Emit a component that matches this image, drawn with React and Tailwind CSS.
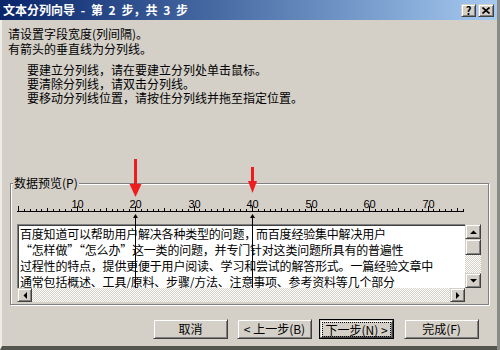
import React from "react";

const CW = 5.85;
const colX = (c) => Math.round(1 + c * CW);

const raised =
  "bg-[#d4d0c8] border border-t-[#d4d0c8] border-l-[#d4d0c8] border-r-[#404040] border-b-[#404040] shadow-[inset_1px_1px_0_#fff,inset_-1px_-1px_0_#808080]";

const lines = [
  "百度知道可以帮助用户解决各种类型的问题，而百度经验集中解决用户",
  "“怎样做”“怎么办”这一类的问题，并专门针对这类问题所具有的普遍性",
  "过程性的特点，提供更便于用户阅读、学习和尝试的解答形式。一篇经验文章中",
  "通常包括概述、工具/原料、步骤/方法、注意事项、参考资料等几个部分",
];

function Arrow({ dir }) {
  const pts = {
    up: "0,4 7,4 3.5,0.5",
    down: "0,0 7,0 3.5,3.5",
    left: "4,0 4,7 0.5,3.5",
    right: "0,0 0,7 3.5,3.5",
  }[dir];
  const vert = dir === "up" || dir === "down";
  return (
    <svg width={vert ? 7 : 4} height={vert ? 4 : 7}>
      <polygon points={pts} fill="#000" />
    </svg>
  );
}

function Ruler() {
  const ticks = [];
  for (let c = 0; c <= 76; c++) {
    const h = c % 10 === 0 ? 5 : c % 5 === 0 ? 3 : 2;
    ticks.push(<rect key={c} x={colX(c)} y={22 - h} width="1" height={h} fill="#000" />);
  }
  return (
    <svg width="465" height="35" className="block">
      <rect x="0" y="22" width={colX(76) + 1} height="1" fill="#000" />
      {ticks}
      {[10, 20, 30, 40, 50, 60, 70].map((n) => (
        <text
          key={n}
          x={colX(n) + 0.5}
          y="19"
          fontSize="11"
          textAnchor="middle"
          fontFamily="Liberation Sans, Arial, sans-serif"
          fill="#000"
        >
          {n}
        </text>
      ))}
    </svg>
  );
}

function Markers() {
  const a = colX(20);
  const b = colX(40);
  return (
    <svg width="465" height="113" className="absolute left-0 top-0 overflow-visible pointer-events-none">
      {/* black column breaks */}
      {[a, b].map((x) => (
        <g key={x}>
          <polygon points={`${x - 2},${29} ${x + 3},${29} ${x + 0.5},${25}`} fill="#000" />
          <rect x={x} y="29" width="1" height="70" fill="#000" />
        </g>
      ))}
      {/* red arrows */}
      <rect x={a - 1} y="-30" width="3" height="25" fill="#ee1d1d" />
      <polygon points={`${a - 5.5},-5 ${a + 6.5},-5 ${a + 0.5},8`} fill="#ee1d1d" />
      <rect x={b - 1} y="-22" width="3" height="14" fill="#ee1d1d" />
      <polygon points={`${b - 4},-8 ${b + 5},-8 ${b + 0.5},4`} fill="#ee1d1d" />
    </svg>
  );
}

function Btn({ children, def }) {
  if (def) {
    return (
      <div className="w-[75px] h-[20px] border border-black">
        <div className={`${raised} w-full h-full flex items-center justify-center`}>
          <span className="outline outline-1 outline-dotted outline-black px-[2px] leading-[13px]">{children}</span>
        </div>
      </div>
    );
  }
  return (
    <div className={`${raised} w-[75px] h-[20px] flex items-center justify-center`}>{children}</div>
  );
}

export default function App() {
  return (
    <div
      className="w-[500px] h-[350px] flex flex-col bg-[#d4d0c8] border-r-[3px] border-r-[#8a8a86] overflow-hidden text-[12px] text-black"
      style={{ fontFamily: '"Noto Sans CJK SC", "Liberation Sans", sans-serif' }}
    >
      {/* title bar */}
      <div className="h-[20px] shrink-0 flex items-center justify-between pl-[3px] pr-[3px] bg-linear-to-r from-[#0a246a] to-[#a6caf0]">
        <span className="text-white font-bold text-[12px] leading-[14px] whitespace-pre [word-spacing:3px]">
          文本分列向导 - 第 2 步，共 3 步
        </span>
        <div className="flex gap-[2px]">
          <div className={`${raised} w-[15px] h-[13px] flex items-center justify-center text-[11px] font-bold leading-none`}>
            ?
          </div>
          <div className={`${raised} w-[16px] h-[13px] flex items-center justify-center`}>
            <svg width="8" height="7">
              <path d="M0.5 0.5 L7.5 6.5 M7.5 0.5 L0.5 6.5" stroke="#000" strokeWidth="1.6" />
            </svg>
          </div>
        </div>
      </div>

      {/* body */}
      <div className="flex-1 flex flex-col border-l-2 border-l-[#eeede8] border-b-4 border-b-[#55554f]">
        <div className="pl-[6px] pt-[6px]">
          <p className="leading-[15px]">请设置字段宽度(列间隔)。</p>
          <p className="leading-[15px]">有箭头的垂直线为分列线。</p>
          <div className="pl-[19px] mt-[7px] leading-[14px]">
            <p>要建立分列线，请在要建立分列处单击鼠标。</p>
            <p>要清除分列线，请双击分列线。</p>
            <p>要移动分列线位置，请按住分列线并拖至指定位置。</p>
          </div>
        </div>

        {/* group box */}
        <div className="relative mt-[78px] ml-[8px] w-[479px] border border-[#808080] shadow-[1px_1px_0_#fff,inset_1px_1px_0_#fff] pt-[5px] pl-[6px] pb-[2px]">
          <span className="absolute -top-[8px] left-[2px] bg-[#d4d0c8] px-[1px] leading-[14px]">数据预览(P)</span>

          <div className="relative w-[465px]">
            <Ruler />
            <div className="flex">
              <div className="w-[448px] h-[64px] bg-white border-t border-l border-[#808080] shadow-[inset_1px_1px_0_#404040] pl-[2px] pt-[1px] overflow-hidden">
                {lines.map((t, i) => (
                  <div key={i} className="whitespace-nowrap leading-[16px] tracking-[-0.2px]">
                    {t}
                  </div>
                ))}
              </div>
              <div className="w-[16px] h-[64px] flex flex-col bg-[repeating-conic-gradient(#fff_0_25%,#d4d0c8_0_50%)] bg-[length:2px_2px]">
                <div className={`${raised} h-[15px] flex items-center justify-center`}>
                  <Arrow dir="up" />
                </div>
                <div className={`${raised} h-[16px]`} />
                <div className="flex-1" />
                <div className={`${raised} h-[15px] flex items-center justify-center`}>
                  <Arrow dir="down" />
                </div>
              </div>
            </div>
            <div className="flex h-[14px]">
              <div className="w-[448px] flex bg-[repeating-conic-gradient(#fff_0_25%,#d4d0c8_0_50%)] bg-[length:2px_2px]">
                <div className={`${raised} w-[15px] flex items-center justify-center`}>
                  <Arrow dir="left" />
                </div>
                <div className="flex-1" />
                <div className={`${raised} w-[15px] flex items-center justify-center`}>
                  <Arrow dir="right" />
                </div>
              </div>
              <div className="w-[16px] bg-[#d4d0c8]" />
            </div>
            <Markers />
          </div>
        </div>

        {/* buttons */}
        <div className="flex mt-[14px] pl-[151px]">
          <Btn>取消</Btn>
          <div className="ml-[9px]">
            <Btn>&lt; 上一步(B)</Btn>
          </div>
          <div className="ml-[7px]">
            <Btn def>下一步(N) &gt;</Btn>
          </div>
          <div className="ml-[10px]">
            <Btn>完成(F)</Btn>
          </div>
        </div>
      </div>
    </div>
  );
}
